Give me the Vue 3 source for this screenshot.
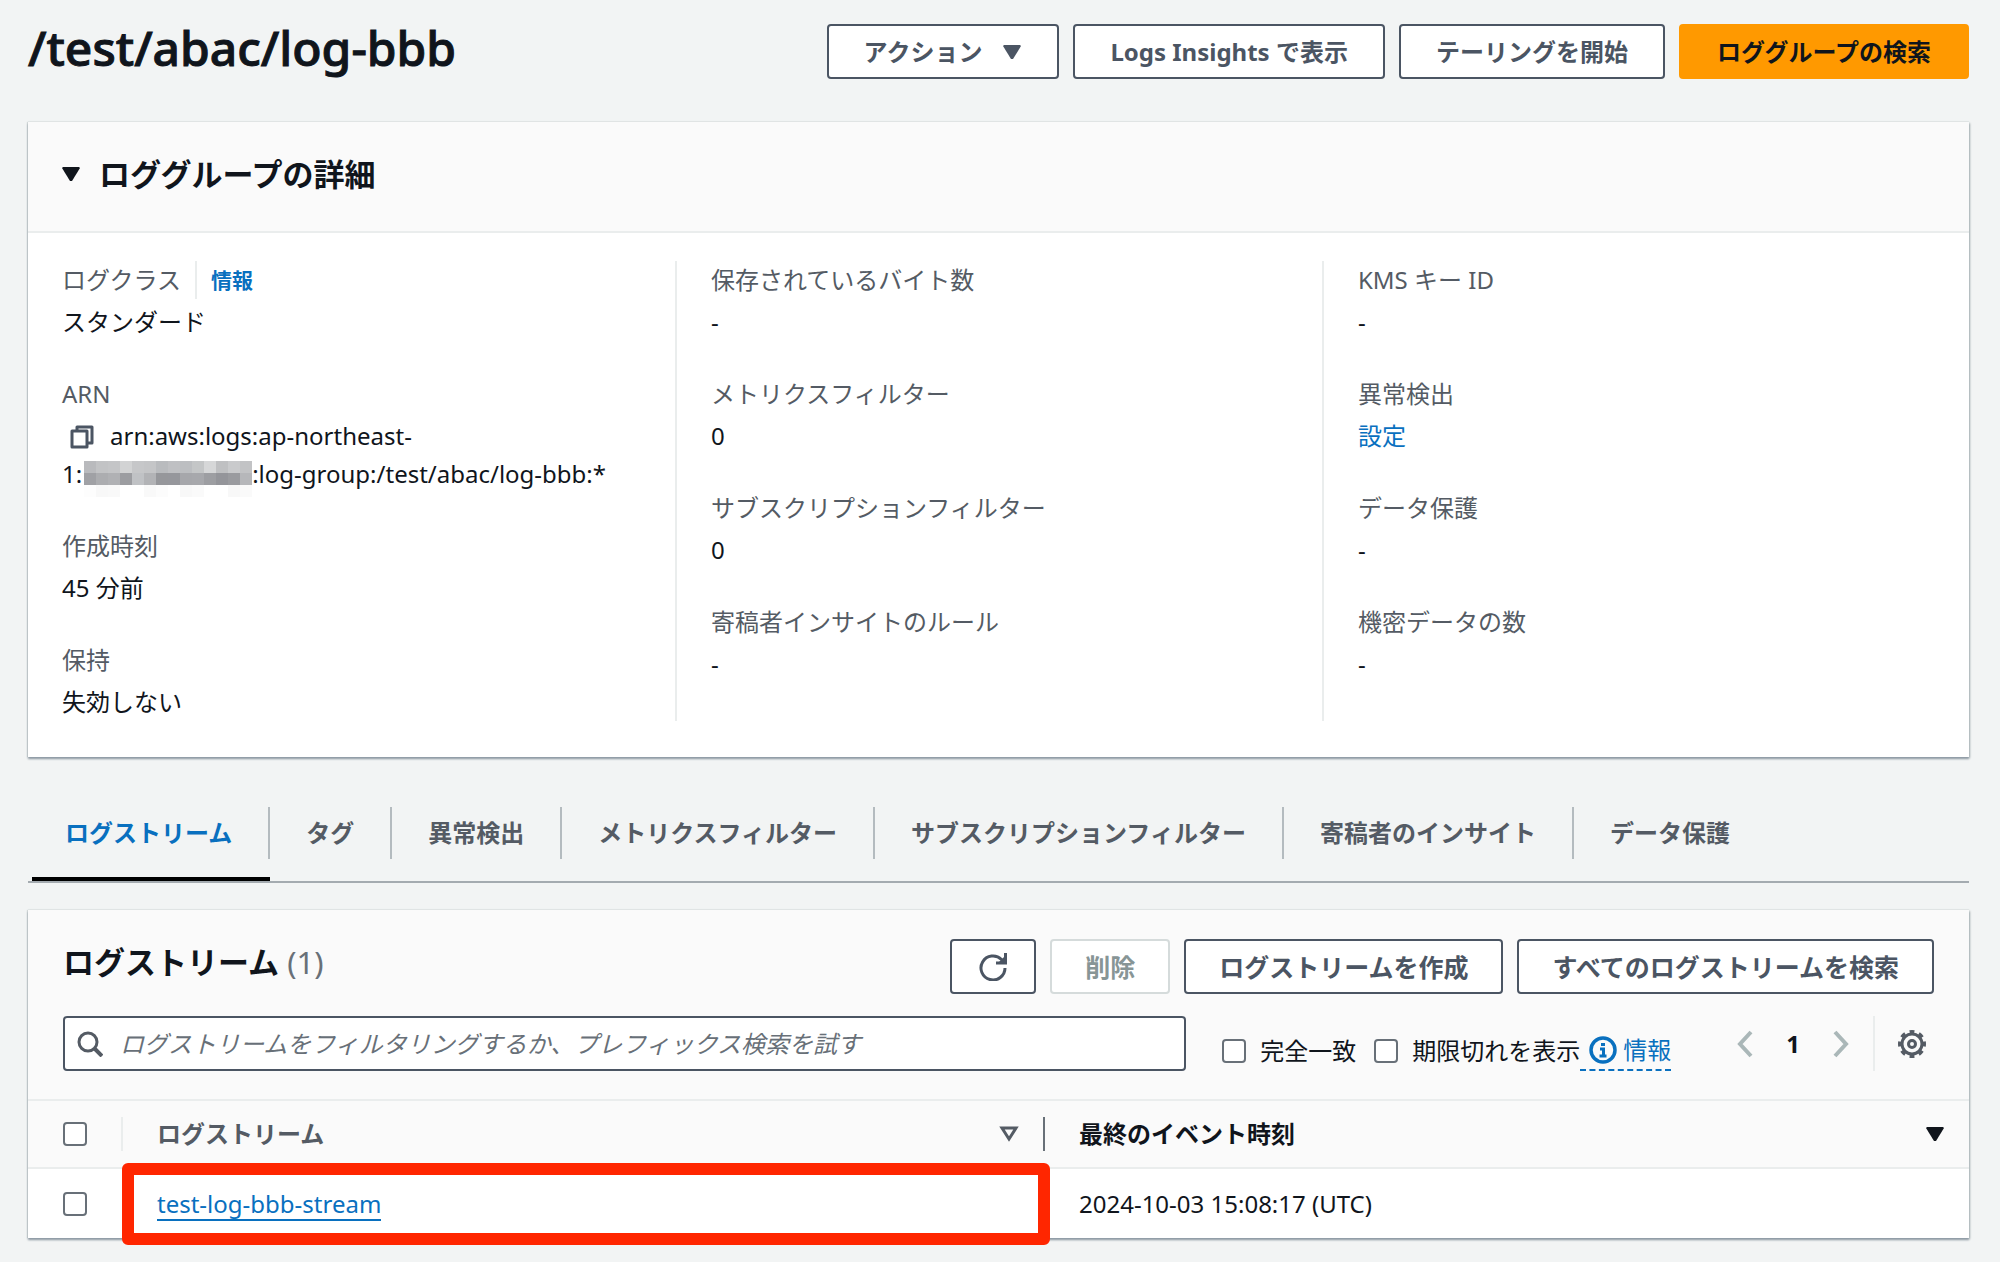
<script setup>
import { ref } from 'vue'

const query = ref('')
const exact = ref(false)
const expired = ref(false)

const columns = [
  [
    { label: 'ログクラス', info: '情報', value: 'スタンダード' },
    { label: 'ARN', arn: true },
    { label: '作成時刻', value: '45 分前' },
    { label: '保持', value: '失効しない' }
  ],
  [
    { label: '保存されているバイト数', value: '-' },
    { label: 'メトリクスフィルター', value: '0' },
    { label: 'サブスクリプションフィルター', value: '0' },
    { label: '寄稿者インサイトのルール', value: '-' }
  ],
  [
    { label: 'KMS キー ID', value: '-' },
    { label: '異常検出', link: '設定' },
    { label: 'データ保護', value: '-' },
    { label: '機密データの数', value: '-' }
  ]
]

const tabs = [
  'ログストリーム',
  'タグ',
  '異常検出',
  'メトリクスフィルター',
  'サブスクリプションフィルター',
  '寄稿者のインサイト',
  'データ保護'
]
const activeTab = ref(tabs[0])

const none = 'transparent'
const mosaic = [
  [none, none, none, none, none, none, none, none, none, none, none, none, none, none],
  ['#b9babd', '#c2c3c5', '#c4c5c7', '#d2d3d4', '#c6c7c9', '#c4c5c7', '#b9bbbe', '#bfc0c3', '#bcbec1', '#c4c6c7', '#d6d7d8', '#bfc0c2', '#c9cacc', '#c2c3c5'],
  ['#a0a1a5', '#acadb0', '#b0b1b4', '#9c9da1', '#c0c2c5', '#b2b3b6', '#96979b', '#96979c', '#a6a7ab', '#a7a8ac', '#9d9ea2', '#94959a', '#9a9b9f', '#b6b7ba'],
  ['#fdfdfd', '#f8f8f8', '#f9f9f9', none, none, '#f9f9f9', '#fcfcfc', none, '#f8f8f8', '#fafafa', none, none, '#f8f8f8', '#fafafa']
]
</script>

<template>
  <main class="page">
    <header class="page-head">
      <h1>/test/abac/log-bbb</h1>
      <div class="actions">
        <button type="button" class="btn">
          アクション
          <svg class="caret" viewBox="0 0 20 16" aria-hidden="true"><path d="M2 1h16l1 1-8 13h-2L1 2z" /></svg>
        </button>
        <button type="button" class="btn">Logs Insights で表示</button>
        <button type="button" class="btn">テーリングを開始</button>
        <button type="button" class="btn primary">ロググループの検索</button>
      </div>
    </header>

    <section class="card">
      <div class="details-head">
        <svg class="caret" viewBox="0 0 20 16" aria-hidden="true"><path d="M2 1h16l1 1-8 13h-2L1 2z" /></svg>
        <h2>ロググループの詳細</h2>
      </div>
      <div class="details">
        <dl v-for="(column, i) in columns" :key="i" class="details-col">
          <div v-for="item in column" :key="item.label" class="field">
            <dt>
              {{ item.label }}
              <a v-if="item.info" href="#" class="info">{{ item.info }}</a>
            </dt>
            <dd v-if="item.arn">
              <button type="button" class="copy" aria-label="コピー">
                <svg viewBox="0 0 24 24" aria-hidden="true">
                  <path d="M7 6V2h15v16h-4" />
                  <path d="M2 6h15v16H2z" />
                </svg>
              </button>arn:aws:logs:ap-northeast-<br />1:<span class="mosaic" aria-hidden="true"><span
                v-for="(row, r) in mosaic" :key="r" class="mosaic-row"><i
                  v-for="(c, n) in row" :key="n" :style="{ background: c }"></i></span></span>:log-group:/test/abac/log-bbb:*
            </dd>
            <dd v-else-if="item.link"><a href="#">{{ item.link }}</a></dd>
            <dd v-else>{{ item.value }}</dd>
          </div>
        </dl>
      </div>
    </section>

    <nav class="tabs">
      <button
        v-for="tab in tabs"
        :key="tab"
        type="button"
        class="tab"
        :class="{ active: tab === activeTab }"
        @click="activeTab = tab"
      >
        <span>{{ tab }}</span>
      </button>
    </nav>

    <section class="card">
      <div class="streams-head">
        <div class="title-row">
          <h2>ログストリーム <span class="count">(1)</span></h2>
          <div class="actions">
            <button type="button" class="btn icon-btn" aria-label="更新">
              <svg viewBox="0 0 28 28" aria-hidden="true">
                <path d="M26 15A12 12 0 1 1 22.500 6.500L25 9" />
                <path d="M26.500 0v10H17" />
                <path class="solid" d="M26 3v7h-7z" />
              </svg>
            </button>
            <button type="button" class="btn" disabled>削除</button>
            <button type="button" class="btn">ログストリームを作成</button>
            <button type="button" class="btn">すべてのログストリームを検索</button>
          </div>
        </div>
        <div class="filter-row">
          <label class="search">
            <svg viewBox="0 0 26 26" aria-hidden="true">
              <circle cx="11" cy="11" r="9" />
              <path d="M17 17l8 8" stroke-width="4" />
            </svg>
            <input
              v-model="query"
              type="text"
              aria-label="ログストリームの検索"
              placeholder="ログストリームをフィルタリングするか、プレフィックス検索を試す"
            />
          </label>
          <div class="options">
            <label class="check"><input v-model="exact" type="checkbox" />完全一致</label>
            <label class="check"><input v-model="expired" type="checkbox" />期限切れを表示</label>
            <a href="#" class="info-link">
              <svg viewBox="0 0 28 28" aria-hidden="true">
                <circle cx="14" cy="14" r="12" stroke-width="3.500" />
                <path d="M12 8.500h4" />
                <path d="M11 13h3.500v7M10.500 20h7" />
              </svg>
              情報
            </a>
          </div>
          <div class="pager">
            <button type="button" aria-label="前のページ"><svg viewBox="0 0 16 28" aria-hidden="true"><path d="M14 2L3 14l11 12" /></svg></button>
            <span class="page-no">1</span>
            <button type="button" aria-label="次のページ"><svg viewBox="0 0 16 28" aria-hidden="true"><path d="M2 2l11 12L2 26" /></svg></button>
          </div>
          <button type="button" class="gear" aria-label="設定">
            <svg viewBox="0 0 28 28" aria-hidden="true">
              <circle cx="14" cy="14" r="10" stroke-width="3" />
              <circle cx="14" cy="14" r="12" pathLength="16" stroke-width="4" stroke-dasharray="1 1" stroke-dashoffset=".5" />
              <circle cx="14" cy="14" r="3.500" />
            </svg>
          </button>
        </div>
      </div>

      <table>
        <thead>
          <tr>
            <th class="pick"><input type="checkbox" aria-label="すべて選択" /></th>
            <th class="name">
              <div class="th-in">
                ログストリーム
                <svg class="sort" viewBox="0 0 20 16" aria-hidden="true"><path d="M3 2h14l-7 11z" /></svg>
              </div>
            </th>
            <th class="time">
              <div class="th-in">
                最終のイベント時刻
                <svg class="caret" viewBox="0 0 20 16" aria-hidden="true"><path d="M2 1h16l1 1-8 13h-2L1 2z" /></svg>
              </div>
            </th>
          </tr>
        </thead>
        <tbody>
          <tr>
            <td class="pick"><input type="checkbox" aria-label="test-log-bbb-stream を選択" /></td>
            <td class="name marked"><a href="#" class="stream">test-log-bbb-stream</a></td>
            <td class="time">2024-10-03 15:08:17 (UTC)</td>
          </tr>
        </tbody>
      </table>
    </section>
  </main>
</template>

<style>
body {
  margin: 0;
  background: #f2f4f4;
}
</style>

<style scoped>
.page {
  box-sizing: border-box;
  padding: 24px 31px 23px 28px;
  font: 24px/38px "Noto Sans", "Noto Sans CJK JP", sans-serif;
  color: #10151c;
}
button,
input {
  font: inherit;
  color: inherit;
}
button {
  cursor: pointer;
}
h1,
h2,
dl,
dd {
  margin: 0;
}
a {
  color: #0970bf;
  text-decoration: none;
}
svg {
  display: block;
  flex: none;
  fill: none;
  stroke: currentColor;
}
.page-head {
  display: flex;
  justify-content: space-between;
  align-items: flex-start;
  margin-bottom: 43px;
}
h1 {
  font-size: 48px;
  line-height: 48px;
  font-weight: 500;
  -webkit-text-stroke: 1px currentColor;
}
h2 {
  font-size: 31px;
  line-height: 40px;
  font-weight: 700;
}
.actions {
  display: flex;
  gap: 14px;
}
.btn {
  box-sizing: border-box;
  display: flex;
  align-items: center;
  height: 55px;
  padding: 0 35px;
  border: 2px solid #4b5563;
  border-radius: 4px;
  background: #fff;
  color: #4b5563;
  font-weight: 700;
  white-space: nowrap;
}
.btn.primary {
  padding: 0 36px;
  background: #ff9900;
  border-color: #ff9900;
  color: #10151c;
}
.btn:disabled {
  border-color: #d5dbdb;
  color: #879596;
}
.caret {
  width: 20px;
  height: 16px;
  fill: currentColor;
  stroke: none;
}
.btn .caret {
  margin-left: 20px;
}
.card {
  background: #fff;
  box-shadow: 0 2px 2px #8f9ba5, 1px 1px 2px #b5bdbe, -1px 0 1px #d5dada, 0 -1px 1px #e6eaea;
}
.details-head {
  display: flex;
  align-items: center;
  gap: 18px;
  padding: 32px 33px 37px;
  background: #fafafa;
  border-bottom: 2px solid #eaeded;
}
.details {
  display: grid;
  grid-template-columns: repeat(3, 1fr);
  padding: 28px 0 36px;
}
.details-col {
  padding: 0 34px;
}
.details-col + .details-col {
  border-left: 2px solid #eaeded;
}
.field + .field {
  margin-top: 34px;
}
dt {
  display: flex;
  margin-bottom: 4px;
  color: #545b64;
}
.info {
  margin-left: 14px;
  padding-left: 14px;
  border-left: 2px solid #eaeded;
  font-size: 21px;
  font-weight: 700;
}
.copy {
  display: inline-block;
  vertical-align: middle;
  margin: -4px 16px 0 8px;
  padding: 0;
  border: 0;
  background: none;
  color: #4b5563;
}
.copy svg {
  width: 24px;
  height: 24px;
  stroke-width: 3;
  stroke-linejoin: round;
}
.mosaic {
  display: inline-block;
  vertical-align: middle;
  margin: -14px 0 -6px 2px;
}
.mosaic-row {
  display: flex;
}
.mosaic-row i {
  width: 12px;
  height: 12px;
}
.tabs {
  display: flex;
  margin-top: 50px;
  margin-bottom: 27px;
  border-bottom: 2px solid #a4abb0;
  padding-left: 4px;
}
.tab {
  padding: 0 0 18px;
  border: 0;
  border-bottom: 4px solid transparent;
  background: none;
  color: #545b64;
  font-weight: 700;
}
.tab span {
  display: block;
  padding: 7px 36px;
  border-right: 2px solid #b4bbbf;
}
.tab:first-child span {
  padding-left: 33px;
}
.tab:last-child span {
  border-right: 0;
}
.tab.active {
  color: #0970bf;
  border-bottom-color: #000;
}
.streams-head {
  padding: 29px 35px 28px;
  background: #fafafa;
  border-bottom: 2px solid #eaeded;
}
.title-row,
.filter-row {
  display: flex;
  justify-content: space-between;
}
.title-row h2 {
  line-height: 46px;
}
.title-row .btn {
  padding: 0 33px;
  font-size: 25px;
}
.title-row .icon-btn {
  padding: 0 27px;
}
.icon-btn svg {
  width: 28px;
  height: 28px;
  stroke-width: 3;
}
.solid {
  fill: currentColor;
  stroke: none;
}
.count {
  color: #687078;
  font-weight: 400;
}
.filter-row {
  margin-top: 22px;
}
.search {
  box-sizing: border-box;
  display: flex;
  align-items: center;
  flex: 1;
  gap: 17px;
  height: 55px;
  padding: 0 12px;
  border: 2px solid #4b5563;
  border-radius: 4px;
  background: #fff;
  color: #545b64;
}
.search svg {
  width: 26px;
  height: 26px;
  stroke-width: 3;
}
.search input {
  flex: 1;
  min-width: 0;
  padding: 0;
  border: 0;
  outline: 0;
  background: none;
}
.search input::placeholder {
  color: #687078;
  font-style: italic;
  opacity: 1;
}
.options {
  display: flex;
  align-items: flex-end;
  margin-left: 36px;
}
.check {
  display: flex;
  align-items: center;
  gap: 14px;
  height: 40px;
  margin-right: 18px;
}
.check + .check {
  margin-right: 0;
}
input[type="checkbox"] {
  appearance: none;
  box-sizing: border-box;
  flex: none;
  display: block;
  width: 24px;
  height: 24px;
  margin: 0;
  border: 2px solid #687078;
  border-radius: 4px;
  background: #fff;
}
.info-link {
  display: flex;
  align-items: center;
  gap: 6px;
  height: 38px;
  padding-left: 9px;
  border-bottom: 2px dashed #0970bf;
}
.info-link svg {
  width: 28px;
  height: 28px;
  stroke-width: 3;
}
.pager {
  display: flex;
  align-items: center;
  gap: 33px;
  margin-left: 66px;
  padding-right: 24px;
}
.pager button,
.gear {
  padding: 0;
  border: 0;
  background: none;
}
.pager svg {
  width: 16px;
  height: 28px;
  stroke: #aab7b8;
  stroke-width: 4;
}
.page-no {
  font-weight: 700;
}
.gear {
  padding: 0 22px 0 23px;
  margin-right: -14px;
  border-left: 2px solid #eaeded;
  color: #545b64;
}
.gear svg {
  width: 28px;
  height: 28px;
  stroke-width: 3;
}
table {
  width: 100%;
  border-collapse: collapse;
  table-layout: fixed;
}
th,
td {
  padding: 0;
  text-align: left;
}
thead tr {
  height: 67px;
  background: #fafafa;
  border-bottom: 2px solid #eaeded;
}
tbody tr {
  height: 70px;
}
.pick {
  width: 93px;
}
.pick input {
  margin-left: 35px;
}
.name {
  width: 922px;
}
.th-in {
  display: flex;
  justify-content: space-between;
  align-items: center;
  height: 34px;
  padding: 0 24px 0 34px;
  border-left: 2px solid #eaeded;
}
.name .th-in {
  color: #545b64;
}
.time .th-in {
  border-left-color: #687078;
}
.sort {
  width: 20px;
  height: 16px;
  stroke-width: 3;
}
td.name,
td.time {
  padding-left: 36px;
}
.marked {
  position: relative;
}
.marked::after {
  content: "";
  position: absolute;
  inset: -6px -7px -7px 1px;
  border: 12px solid #ff2600;
  border-radius: 6px;
  pointer-events: none;
}
.stream {
  display: inline-block;
  line-height: 30px;
  border-bottom: 2px solid #0970bf;
}
</style>
